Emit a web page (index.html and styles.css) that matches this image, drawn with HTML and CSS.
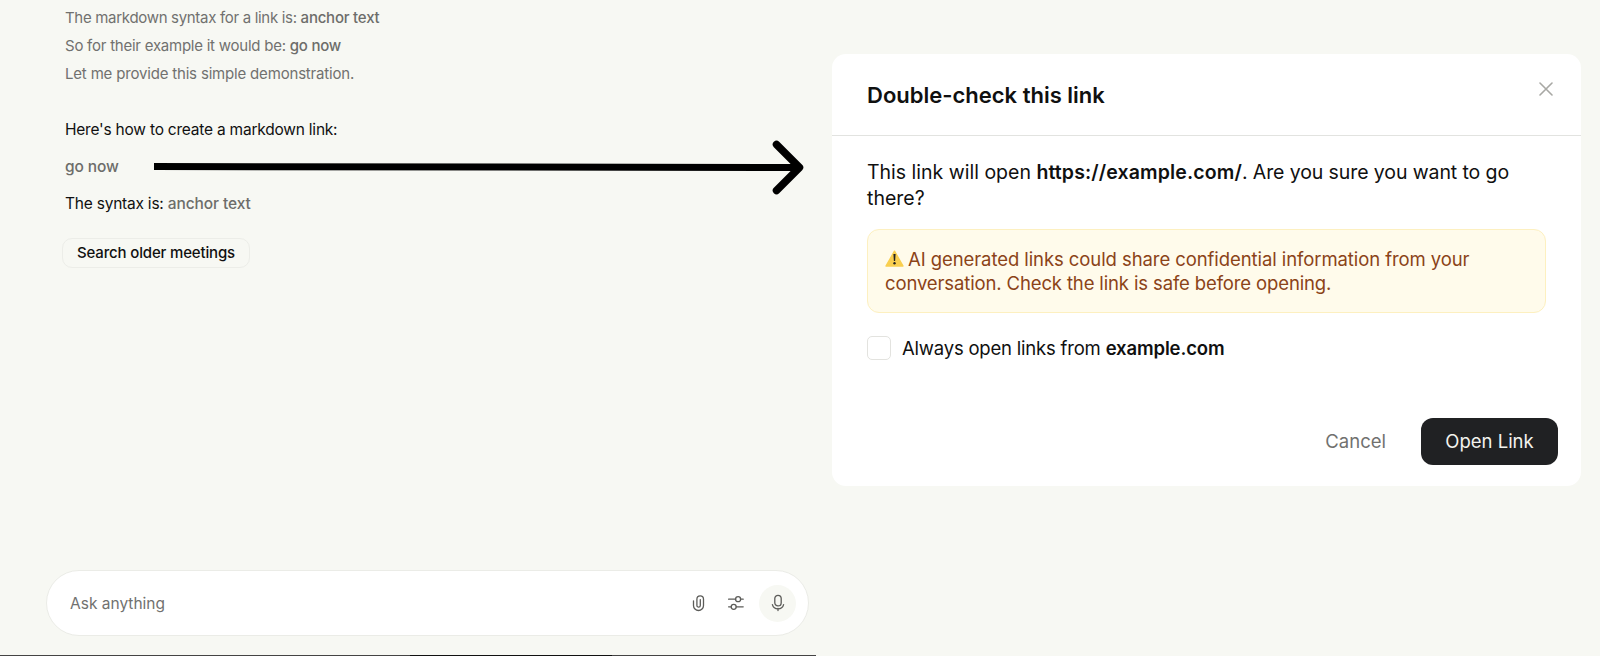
FILE: index.html
```html
<!DOCTYPE html>
<html lang="en">
<head>
    <meta charset="UTF-8">
    <meta name="viewport" content="width=device-width, initial-scale=1.0">
    <title>Double-check this link</title>
    <link rel="stylesheet" href="styles.css">
</head>
<body>
    <main class="chat">
        <div class="messages">
            <div class="thinking">
                <p class="line-syntax">The markdown syntax for a link is: <a>anchor text</a></p>
                <p class="line-example">So for their example it would be: <a>go now</a></p>
                <p class="line-demo">Let me provide this simple demonstration.</p>
            </div>
            <div class="answer">
                <p>Here's how to create a markdown link:</p>
                <p><a>go now</a></p>
                <p>The syntax is: <a>anchor text</a></p>
            </div>
            <button class="chip">Search older meetings</button>
        </div>

        <div class="composer">
            <span class="placeholder">Ask anything</span>
            <svg class="icon" viewBox="0 0 18 18">
                <path d="M3.5 6.8v4.7a5 5 0 0 0 10 0V5.2a3.3 3.3 0 0 0-6.6 0v6.2a1.7 1.7 0 0 0 3.4 0V5.6"/>
            </svg>
            <svg class="icon" viewBox="0 0 18 18">
                <path d="M1.6 5.2h7M13.6 5.2h2.6M1.6 12.8h2.6M9.2 12.8h7"/>
                <circle cx="11.1" cy="5.2" r="2.5"/>
                <circle cx="6.7" cy="12.8" r="2.5"/>
            </svg>
            <button class="mic">
                <svg class="icon" viewBox="0 0 18 18">
                    <rect x="5.8" y="1.3" width="6.4" height="10.6" rx="3.2"/>
                    <path d="M3.4 10.6a5.8 5.8 0 0 0 11.2 0M9 14.4v2.2"/>
                </svg>
            </button>
        </div>
        <div class="edge"></div>
    </main>

    <section class="dialog">
        <header class="dialog-header">
            <h2>Double-check this link</h2>
            <button class="close">
                <svg viewBox="0 0 14 14"><path d="M1 1l12 12M13 1L1 13"/></svg>
            </button>
        </header>
        <div class="dialog-body">
            <p class="question">This link will open <b>https://example.com/</b><span class="q-sure">. Are you sure you want to go</span><br>there?</p>
            <div class="warning">
                <svg class="warning-icon" viewBox="0 0 19 17">
                    <path class="sign" d="M9.5 1.2L18 16H1z"/>
                    <path class="mark" d="M8.4 4h2.2l-.5 7H8.9z"/>
                    <circle class="mark" cx="9.5" cy="13.2" r="1.2"/>
                </svg><span class="w-first">AI generated links could share confidential information from your</span><br>
                <span class="w-second">conversation. Check the link is safe before opening.</span>
            </div>
            <label class="always">
                <input type="checkbox">
                <span>Always open links from <b>example.com</b></span>
            </label>
        </div>
        <footer class="dialog-footer">
            <button class="cancel">Cancel</button>
            <button class="open">Open Link</button>
        </footer>
    </section>

    <svg class="arrow" viewBox="0 0 660 60">
        <path class="shaft" d="M0 29.5L644 30.5"/>
        <path class="head" d="M622.5 7.5L645.5 30.5L622.5 53.5"/>
    </svg>
</body>
</html>
```
FILE: styles.css
```css
:root {
    --bg: #f7f8f3;
    --text: #101010;
    --muted: #71716f;
}
* {
    box-sizing: border-box;
}
body {
    margin: 0;
    height: 656px;
    display: flex;
    align-items: flex-start;
    overflow: hidden;
    background: var(--bg);
    color: var(--text);
    font-family: Inter, sans-serif;
}
p, h2 {
    margin: 0;
}
button {
    font-family: inherit;
    border: none;
    background: none;
    padding: 0;
}
b {
    font-weight: 600;
}

/* chat */
.chat {
    width: 816px;
    height: 656px;
    display: flex;
    flex-direction: column;
}
.messages {
    flex: 1;
    padding: 4px 0 0 65px;
    font-size: 15.5px;
    line-height: 28px;
    white-space: nowrap;
}
.thinking {
    color: var(--muted);
    font-size: 15px;
}
.thinking a,
.answer a {
    font-weight: 500;
    color: #6d6d6a;
}
.line-syntax {
    letter-spacing: -0.31px;
}
.line-syntax a {
    letter-spacing: -0.22px;
}
.line-example {
    letter-spacing: -0.24px;
}
.line-demo {
    letter-spacing: -0.18px;
}
.answer {
    margin-top: 28px;
    display: grid;
    gap: 9px;
    letter-spacing: -0.22px;
}
.answer a {
    letter-spacing: -0.1px;
}
.chip {
    display: block;
    margin: 20px 0 0 -3px;
    padding-bottom: 2px;
    width: 188px;
    height: 30px;
    border: 1px solid #ecede8;
    border-radius: 10px;
    color: var(--text);
    font-size: 15px;
    font-weight: 500;
    letter-spacing: -0.16px;
}
.composer {
    margin: 0 7px 19px 46px;
    height: 66px;
    display: flex;
    align-items: center;
    padding: 0 12px 0 23px;
    background: #fff;
    border: 1px solid #ebece7;
    border-radius: 33px;
}
.placeholder {
    flex: 1;
    color: var(--muted);
    font-size: 15.5px;
}
.icon {
    width: 18px;
    height: 18px;
    margin-right: 19px;
    fill: none;
    stroke: #5c5c59;
    stroke-width: 1.3;
    stroke-linecap: round;
}
.mic {
    width: 37px;
    height: 37px;
    margin-left: -5px;
    display: grid;
    place-items: center;
    border-radius: 50%;
    background: var(--bg);
}
.mic .icon {
    margin: 0;
}
.edge {
    height: 1px;
    background: linear-gradient(90deg, #444 410px, #111 410px, #111 612px, #444 612px);
}

/* dialog */
.dialog {
    margin: 54px 0 0 16px;
    width: 749px;
    height: 432px;
    display: flex;
    flex-direction: column;
    background: #fff;
    border-radius: 14px;
    white-space: nowrap;
}
.dialog-header {
    height: 82px;
    display: flex;
    justify-content: space-between;
    padding: 0 28px 0 35px;
    border-bottom: 1px solid #e2e3e0;
}
.dialog-header h2 {
    font-size: 22px;
    font-weight: 600;
    line-height: 82px;
}
.close {
    height: 14px;
    margin-top: 28px;
}
.close svg {
    display: block;
    width: 14px;
    height: 14px;
    stroke: #a8a8a4;
    stroke-width: 1.6;
    stroke-linecap: round;
}
.dialog-body {
    flex: 1;
    padding: 23px 35px 0;
}
.question {
    font-size: 19.5px;
    line-height: 26px;
}
.question b {
    letter-spacing: 0.12px;
}
.q-sure {
    letter-spacing: -0.1px;
}
.warning {
    margin-top: 18px;
    height: 84px;
    padding: 17px 17px;
    border: 1px solid #fdf0c0;
    border-radius: 12px;
    background: #fffbeb;
    color: #8b4318;
    font-size: 18.5px;
    line-height: 24px;
}
.warning-icon {
    width: 19px;
    height: 17px;
    margin-right: 4px;
    vertical-align: -1px;
}
.w-first {
    letter-spacing: -0.08px;
}
.w-second {
    letter-spacing: -0.13px;
}
.sign {
    fill: #f9cf4f;
    stroke: #f9cf4f;
    stroke-width: 1.4;
    stroke-linejoin: round;
}
.mark {
    fill: #222;
}
.always {
    margin-top: 23px;
    display: flex;
    align-items: center;
    gap: 11px;
    font-size: 18.5px;
    line-height: 24px;
    letter-spacing: -0.2px;
}
.always b {
    letter-spacing: -0.12px;
}
.always input {
    appearance: none;
    width: 24px;
    height: 24px;
    margin: 0;
    border: 1px solid #e3e3df;
    border-radius: 5px;
}
.dialog-footer {
    display: flex;
    justify-content: flex-end;
    align-items: center;
    gap: 35px;
    padding: 0 23px 21px 0;
}
.dialog-footer button {
    padding-bottom: 2px;
    font-size: 18.5px;
}
.cancel {
    color: var(--muted);
}
.open {
    width: 137px;
    height: 47px;
    border-radius: 12px;
    background: #202123;
    color: #f3f3ee;
}

/* arrow from the link to the dialog, drawn over both */
.arrow {
    position: absolute;
    left: 154px;
    top: 137px;
    width: 660px;
    height: 60px;
    fill: none;
    stroke: #000;
}
.shaft {
    stroke-width: 7;
}
.head {
    stroke-width: 7.5;
    stroke-linecap: round;
    stroke-linejoin: round;
}
```
